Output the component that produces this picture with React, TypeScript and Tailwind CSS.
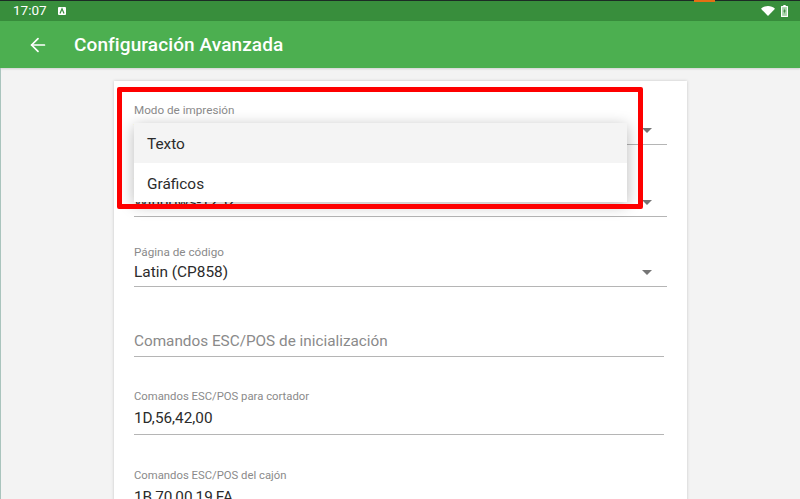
import { ArrowLeft } from "lucide-react";

const font = { fontFamily: "Roboto, sans-serif" };

function SelectField({ label, value, className }: { label: string; value: string; className: string }) {
  return (
    <div className={`relative w-[533px] ${className}`}>
      <p className="text-[11.7px] leading-[14px] text-[#8a8a8a]">{label}</p>
      <p className="mt-[1px] h-[24px] text-[15.4px] leading-[24px] text-[#2b2b2b]">{value}</p>
      <div className="mt-[2px] h-px bg-[#b5b5b5]" />
      <span className="absolute right-[15px] bottom-[12px] h-0 w-0 border-x-[5px] border-t-[5px] border-x-transparent border-t-[#757575]" />
    </div>
  );
}

function TextField({ label, value, className }: { label?: string; value: string; className: string }) {
  return (
    <div className={`w-[530px] ${className}`}>
      {label ? <p className="text-[11.3px] leading-[14px] text-[#8a8a8a]">{label}</p> : null}
      <p className={`h-[24px] text-[15.3px] leading-[24px] ${label ? "mt-[2px] text-[#2b2b2b]" : "text-[#8a8a8a]"}`}>
        {value}
      </p>
      <div className={`h-px bg-[#b5b5b5] ${label ? "mt-[4px]" : "mt-[3px]"}`} />
    </div>
  );
}

export default function App() {
  return (
    <div className="relative flex h-[499px] w-[800px] flex-col overflow-hidden bg-[#f3f3f3]" style={font}>
      <div className="relative h-px shrink-0 bg-[#1c2b25]">
        <span className="absolute top-0 left-[694px] h-[2px] w-[21px] bg-[#e56f14]" />
      </div>
      <div className="flex h-[20px] shrink-0 items-center bg-[#388e3c] pr-[12px] pl-[13px] text-white">
        <span className="text-[13.5px] leading-none">17:07</span>
        <span className="ml-[11px] flex h-[8px] w-[8px] items-center justify-center rounded-[1px] bg-white">
          <svg viewBox="0 0 8 8" className="h-[8px] w-[8px]">
            <path d="M2 6.400 4 1.800 6 6.400" fill="none" stroke="#388e3c" strokeWidth="1.2" />
          </svg>
        </span>
        <svg viewBox="0 0 14 10" className="ml-auto h-[10px] w-[14px]">
          <path d="M0 2.800C1.900 1 4.300 0 7 0s5.100 1 7 2.800L7 10z" fill="#fff" />
        </svg>
        <svg viewBox="0 0 7 12" className="ml-[6px] h-[12px] w-[7px]">
          <path d="M2.300 0h2.400v1H6.500a.5.5 0 0 1 .5.500V11.500a.5.5 0 0 1-.5.500H.5a.5.5 0 0 1-.5-.5V1.500A.5.5 0 0 1 .5 1h1.800z" fill="#fff" />
          <rect x="1.100" y="2.100" width="4.800" height="8.800" fill="#a9d3ab" />
          <path d="M3.900 3.200 2.300 6.500h1.100l-.3 2.400 1.600-3.400H3.600z" fill="#2f7d33" />
        </svg>
      </div>
      <header className="flex h-[47px] shrink-0 items-center bg-[#4caf50] pl-[27px] text-white shadow-[0_1px_2px_rgba(0,0,0,0.15)]">
        <ArrowLeft size={22} strokeWidth={1.9} />
        <h1 className="ml-[25px] text-[19px] leading-none font-medium tracking-[0.1px]">Configuración Avanzada</h1>
      </header>
      <main className="flex min-h-0 flex-1 border-l border-[#a9c4bd] pt-[13px] pl-[113px]">
        <section className="flex h-[600px] w-[573px] flex-col bg-white pl-[20px] shadow-[0_0_3px_rgba(0,0,0,0.18)]">
          <SelectField label="Modo de impresión" value="Texto" className="mt-[22px]" />
          <SelectField label="Tamaño de papel" value="Windows-1252" className="mt-[30px]" />
          <SelectField label="Página de código" value="Latin (CP858)" className="mt-[28px]" />
          <TextField value="Comandos ESC/POS de inicialización" className="mt-[42px]" />
          <TextField label="Comandos ESC/POS para cortador" value="1D,56,42,00" className="mt-[33px]" />
          <TextField label="Comandos ESC/POS del cajón" value="1B,70,00,19,FA" className="mt-[34px]" />
        </section>
      </main>

      <div className="absolute top-[123px] left-[134px] w-[493px] overflow-hidden bg-white shadow-[0_3px_14px_rgba(0,0,0,0.28)]">
        <div className="flex h-[40px] items-center bg-[#f4f4f4] px-[13px] pt-[4px] text-[15.4px] text-[#2b2b2b]">Texto</div>
        <div className="flex h-[39px] items-center px-[13px] pt-[5px] text-[15.4px] text-[#2b2b2b]">Gráficos</div>
      </div>

      <div className="absolute top-[87px] left-[117px] h-[122px] w-[526px] rounded-[2px] border-[5px] border-[#fe0000]" />
    </div>
  );
}
